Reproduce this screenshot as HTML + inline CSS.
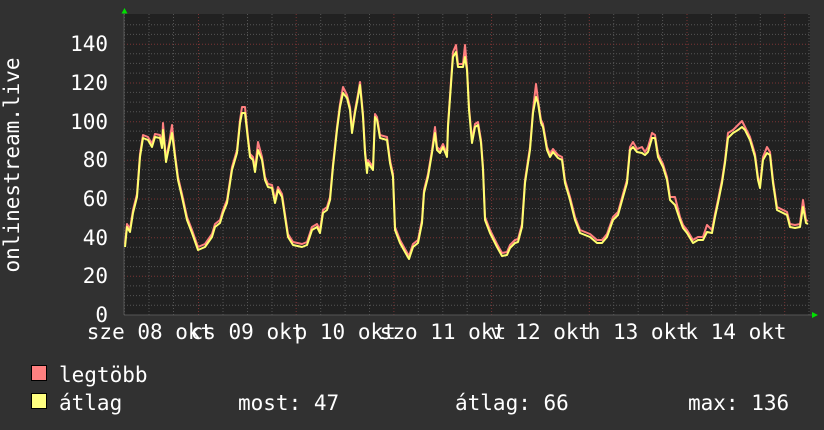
<!DOCTYPE html>
<html><head><meta charset="utf-8"><style>
html,body{margin:0;padding:0;background:#313131;}
svg{display:block}
text{font-family:"DejaVu Sans Mono","Liberation Mono",monospace;fill:#fff;font-size:21px}
</style></head><body>
<svg width="824" height="430" viewBox="0 0 824 430" xmlns="http://www.w3.org/2000/svg">
<rect width="824" height="430" fill="#313131"/>
<rect x="124" y="14" width="686" height="301" fill="#212121"/>
<g id="grid" stroke-dasharray="1,2" stroke-width="1">
<g stroke="#555">
<path d="M124 24.7H810M124 34.4H810M124 53.7H810M124 63.4H810M124 73.1H810M124 92.4H810M124 102.1H810M124 111.8H810M124 131.1H810M124 140.8H810M124 150.5H810M124 169.8H810M124 179.5H810M124 189.2H810M124 208.5H810M124 218.2H810M124 227.9H810M124 247.2H810M124 256.9H810M124 266.6H810M124 285.9H810M124 295.6H810M124 305.3H810"/>
<path d="M124.5 14V315M149 14V315M173.5 14V315M223 14V315M247.5 14V315M272 14V315M320.7 14V315M345.1 14V315M369.5 14V315M418.3 14V315M442.8 14V315M467.2 14V315M516 14V315M540.5 14V315M565 14V315M613.7 14V315M638.2 14V315M662.6 14V315M711.4 14V315M735.8 14V315M760.3 14V315M809 14V315"/>
</g>
<g stroke="#7a3434">
<path d="M124 44.3H810M124 83H810M124 121.7H810M124 160.3H810M124 199H810M124 237.7H810M124 276.3H810"/>
<path d="M198.5 14V315M296.2 14V315M393.9 14V315M491.6 14V315M589.3 14V315M687 14V315M784.7 14V315"/>
</g>
</g>
<path d="M124 315H812M124 315V12" stroke="#555" stroke-width="1"/>
<path d="M121.5 13.5L124.5 8L127.5 13.5Z" fill="#00e000"/>
<path d="M812 312L818 315L812 318Z" fill="#00e000"/>
<g fill="none" stroke-width="2" stroke-linejoin="round">
<polyline transform="translate(0,-3)" stroke="#ff7f7f" points="125,247 127,227 130,232 133,213 137,197 140,157 143,138 148,140 152,147 155,137 160,138 162,148 163,126 166,162 169,147 172,128 175,157 178,180 182,197 187,220 192,233 198,250 205,247 212,237 215,227 220,223 223,213 227,203 232,170 237,153 240,123 242,110 245,110 248,140 250,157 253,160 255,172 258,145 262,160 265,180 268,187 272,188 275,203 278,190 282,197 285,217 288,237 293,245 302,247 307,245 312,230 317,227 320,233 323,213 327,210 330,200 333,167 337,130 340,107 343,90 347,98 350,110 352,133 355,113 358,97 360,85 363,117 365,153 367,173 368,163 373,170 375,117 377,120 380,138 387,140 390,163 393,177 395,230 400,243 405,252 409,259 413,247 418,243 422,223 424,193 428,177 432,153 435,130 437,150 440,153 443,147 447,157 448,127 452,70 453,55 456,48 458,67 463,67 465,48 467,70 469,110 472,143 475,127 478,125 481,143 483,170 485,220 490,233 497,247 502,256 507,255 510,248 515,243 518,242 522,227 525,183 530,150 533,113 536,87 538,103 541,123 543,127 547,150 550,157 553,152 558,158 562,160 565,183 570,200 575,220 580,233 590,237 597,243 602,243 607,237 613,220 618,215 623,197 627,183 630,150 633,145 637,152 642,150 645,155 648,150 652,136 655,138 658,157 663,167 667,180 670,200 675,200 680,220 683,228 687,233 693,243 698,240 703,240 707,228 712,233 715,217 718,203 722,183 725,163 728,136 733,133 738,128 742,124 745,130 750,140 755,157 758,180 760,188 763,160 767,150 770,155 773,183 777,210 783,213 787,215 790,227 795,228 800,227 803,203 806,223 808,224"/>
<polyline stroke="#ffff70" points="125,247 127,227 130,232 133,213 137,197 140,157 143,138 148,140 152,147 155,137 160,138 162,148 163,130 166,162 169,147 172,133 175,157 178,180 182,197 187,220 192,233 198,250 205,247 212,237 215,227 220,223 223,213 227,203 232,170 237,153 240,123 242,113 245,113 248,140 250,157 253,160 255,172 258,150 262,160 265,180 268,187 272,188 275,203 278,190 282,197 285,217 288,237 293,245 302,247 307,245 312,230 317,227 320,233 323,213 327,210 330,200 333,167 337,130 340,107 343,93 347,98 350,110 352,133 355,113 358,97 360,85 363,117 365,153 367,173 368,163 373,170 375,117 377,120 380,138 387,140 390,163 393,177 395,230 400,243 405,252 409,259 413,247 418,243 422,223 424,193 428,177 432,153 435,133 437,150 440,153 443,147 447,157 448,127 452,70 453,57 456,52 458,67 463,67 465,57 467,70 469,110 472,143 475,127 478,125 481,143 483,170 485,220 490,233 497,247 502,256 507,255 510,248 515,243 518,242 522,227 525,183 530,150 533,113 536,97 538,103 541,123 543,127 547,150 550,157 553,152 558,158 562,160 565,183 570,200 575,220 580,233 590,237 597,243 602,243 607,237 613,220 618,215 623,197 627,183 630,150 633,147 637,152 642,153 645,155 648,152 652,138 655,138 658,157 663,167 667,180 670,200 675,205 680,220 683,228 687,233 693,243 698,240 703,240 707,232 712,233 715,217 718,203 722,183 725,163 728,138 733,133 738,130 742,127 745,130 750,140 755,157 758,180 760,188 763,160 767,153 770,155 773,183 777,210 783,213 787,215 790,227 795,228 800,227 803,207 806,223 808,224"/>
</g>
<g text-anchor="end">
<text x="108" y="51">140</text>
<text x="108" y="90">120</text>
<text x="108" y="129">100</text>
<text x="108" y="167">80</text>
<text x="108" y="206">60</text>
<text x="108" y="245">40</text>
<text x="108" y="283">20</text>
<text x="108" y="322">0</text>
</g>
<g text-anchor="middle">
<text x="150" y="339">sze 08 okt</text>
<text x="247.5" y="339">cs 09 okt</text>
<text x="345.2" y="339">p 10 okt</text>
<text x="442.9" y="339">szo 11 okt</text>
<text x="540.6" y="339">v 12 okt</text>
<text x="638.3" y="339">h 13 okt</text>
<text x="736" y="339">k 14 okt</text>
</g>
<text transform="translate(19,165) rotate(-90)" text-anchor="middle">onlinestream.live</text>
<rect x="31.5" y="365.5" width="15" height="15" fill="#ff8080" stroke="#000"/>
<rect x="31.5" y="393.5" width="15" height="15" fill="#ffff80" stroke="#000"/>
<text x="59" y="382">legtöbb</text>
<text x="59" y="410">átlag</text>
<text x="238" y="410">most: 47</text>
<text x="455" y="410">átlag: 66</text>
<text x="688" y="410">max: 136</text>
</svg>
</body></html>
